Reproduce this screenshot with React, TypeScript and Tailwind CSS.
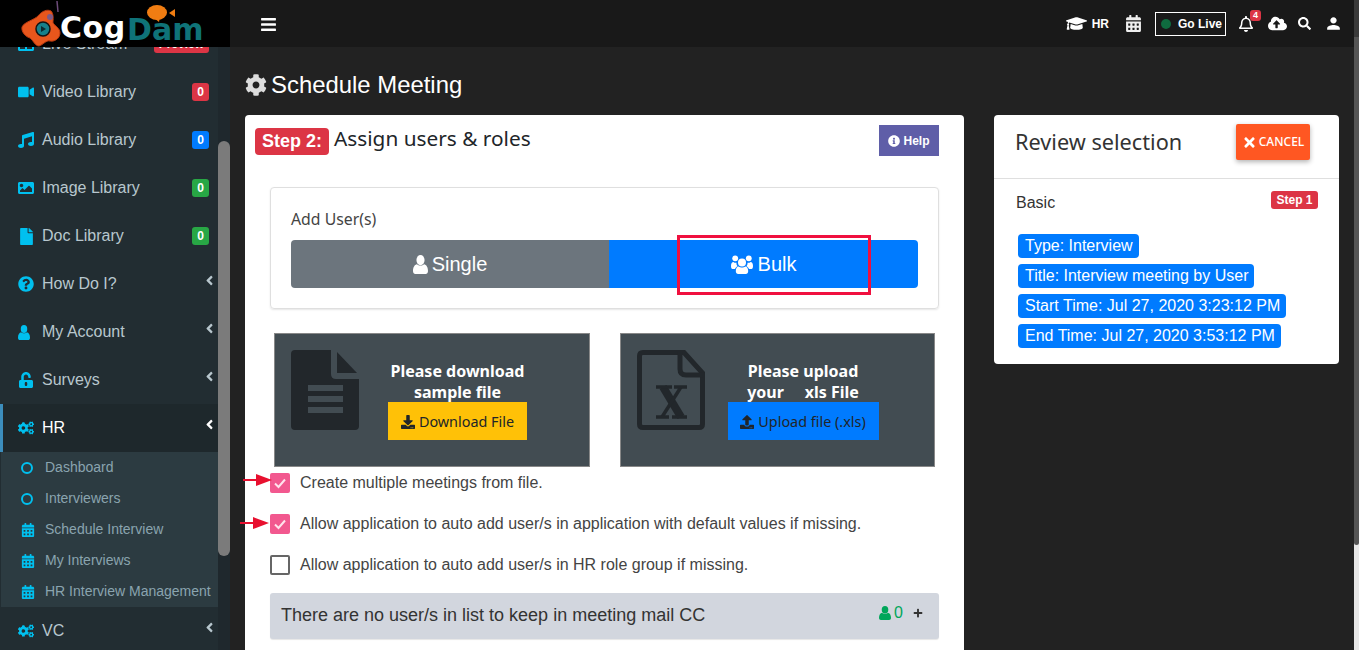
import React from "react";
import {
  FaVideo, FaMusic, FaImage, FaFile, FaQuestionCircle, FaUnlockAlt, FaCogs,
  FaCalendarAlt, FaAngleLeft, FaBars, FaGraduationCap, FaRegBell, FaCloudUploadAlt, FaSearch,
  FaCog, FaInfoCircle, FaDownload, FaUpload, FaTimes, FaPlus, FaTable,
} from "react-icons/fa";
import { MdPerson } from "react-icons/md";

const sans = "font-['Liberation_Sans',Arial,sans-serif]";
const plex = "font-['Noto_Sans',sans-serif]";

function UserIcon({ w, h, className }: { w: number; h: number; className?: string }) {
  return (
    <svg className={className} width={w} height={h} viewBox="0 0 14 16" preserveAspectRatio="none" fill="currentColor">
      <ellipse cx="7" cy="4.300" rx="3.800" ry="4.300" />
      <path d="M0 13.500C0 10.500 1.500 8 3.700 7.800C5 9.300 9 9.300 10.300 7.800C12.500 8 14 10.500 14 13.500C14 15.200 13 16 11.800 16H2.200C1 16 0 15.200 0 13.500Z" />
    </svg>
  );
}

function UsersIcon() {
  return (
    <svg width="22" height="19" viewBox="0 0 22 19" fill="currentColor">
      <circle cx="4.200" cy="3.300" r="2.900" />
      <circle cx="17.800" cy="3.300" r="2.900" />
      <path d="M0 11C0 8.500 1 7 2.500 7C3.300 7.800 4.500 8 5.500 7.700C5.300 9 5.800 10.300 6.600 11.200C5.300 11.700 4.400 12.800 4 14H1.500C0.600 14 0 13 0 11Z" />
      <path d="M22 11C22 8.500 21 7 19.500 7C18.700 7.800 17.500 8 16.500 7.700C16.700 9 16.200 10.300 15.400 11.200C16.700 11.700 17.600 12.800 18 14H20.500C21.400 14 22 13 22 11Z" />
      <circle cx="11" cy="7.500" r="4" />
      <path d="M4.800 16C4.800 13.500 6 11.500 7.800 11.500C9.300 12.800 12.700 12.800 14.200 11.500C16 11.500 17.200 13.500 17.200 16C17.200 18 16.200 19 14.800 19H7.200C5.800 19 4.800 18 4.800 16Z" />
    </svg>
  );
}

function Badge({ c, t }: { c: string; t: string }) {
  return <span className={`${c} ml-auto mr-[3px] rounded-[3px] px-[5px] py-[2px] text-[12px] font-bold leading-[14px] text-white`}>{t}</span>;
}

function NavRow({ icon, label, badge, chevron, active }: { icon: React.ReactNode; label: string; badge?: React.ReactNode; chevron?: boolean; active?: boolean }) {
  return (
    <div className={`flex h-[48px] items-center border-l-[3px] pl-[18px] pr-[6px] ${active ? "border-[#3c8dbc] bg-[#1e282c] text-white" : "border-transparent text-[#b8c7ce]"}`}>
      <span className="-ml-[3px] flex w-[24px] items-center text-[16px] text-[#00c0ef]">{icon}</span>
      <span className="text-[16px]">{label}</span>
      {badge}
      {chevron && <FaAngleLeft className={`-mr-[5px] mb-[8px] ml-auto text-[15px] ${active ? "text-white" : "text-[#b8c7ce]"}`} />}
    </div>
  );
}

function Ring() {
  return <span className="block h-[12px] w-[12px] rounded-full border-2 border-[#00c0ef]" />;
}

function SubRow({ icon, label }: { icon: React.ReactNode; label: string }) {
  return (
    <div className="flex h-[31px] items-center pl-[20px] text-[14px] text-[#8aa4af]">
      <span className="flex w-[24px] items-center text-[14px] text-[#00c0ef]">{icon}</span>
      <span className="whitespace-nowrap">{label}</span>
    </div>
  );
}

function Logo() {
  return (
    <div className="relative h-[47px] w-[230px] font-['DejaVu_Sans',sans-serif]">
      <svg className="absolute left-0 top-0" width="70" height="47" viewBox="0 0 70 47">
        <path d="M57 1l1 11" stroke="#6d4c7a" strokeWidth="1.5" fill="none" />
        <path d="M22 27C24 22 34 20 38 16C42 11 47 9 51 11C54 14 53 20 53 23C55 26 60 28 60 33C60 38 55 42 50 41C46 40 43 45 39 46C35 46 33 40 30 38C26 37 21 32 22 27Z" fill="#e8561c" stroke="#b93a10" strokeWidth="1" />
        <circle cx="50" cy="17" r="3" fill="#7d5a86" />
        <circle cx="43" cy="29" r="7" fill="#17808a" stroke="#141414" strokeWidth="1.5" />
        <path d="M41 26l5 3-5 3z" fill="#0b2a30" />
      </svg>
      <span className="absolute left-[60px] top-[9px] text-[30px] font-bold leading-[38px] tracking-[0.5px] text-white">Cog</span>
      <span className="absolute left-[127px] top-[11px] text-[30px] font-bold leading-[38px] text-[#0f7378]">Dam</span>
      <svg className="absolute left-[146px] top-[4px]" width="30" height="18" viewBox="0 0 30 18">
        <ellipse cx="11" cy="8.500" rx="10" ry="7.500" fill="#f07d12" />
        <path d="M8 14l5 4 1-5z" fill="#f07d12" />
        <path d="M23 9l6-4v8z" fill="#f07d12" />
      </svg>
    </div>
  );
}

function Sidebar() {
  return (
    <aside className={`relative h-[650px] w-[230px] shrink-0 overflow-hidden bg-[#222d32] ${sans}`}>
      <div className="mt-[20px] w-[218px]">
        <NavRow icon={<FaTable />} label="Live Stream" badge={<Badge c="bg-[#dc3545]" t="Preview" />} />
        <NavRow icon={<FaVideo />} label="Video Library" badge={<Badge c="bg-[#dc3545]" t="0" />} />
        <NavRow icon={<FaMusic />} label="Audio Library" badge={<Badge c="bg-[#007bff]" t="0" />} />
        <NavRow icon={<FaImage />} label="Image Library" badge={<Badge c="bg-[#28a745]" t="0" />} />
        <NavRow icon={<FaFile className="text-[17px]" />} label="Doc Library" badge={<Badge c="bg-[#28a745]" t="0" />} />
        <NavRow icon={<FaQuestionCircle />} label="How Do I?" chevron />
        <NavRow icon={<UserIcon w={12} h={15} />} label="My Account" chevron />
        <NavRow icon={<FaUnlockAlt />} label="Surveys" chevron />
        <NavRow icon={<FaCogs />} label="HR" chevron active />
        <div className="ml-px bg-[#2c3b41]">
          <SubRow icon={<Ring />} label="Dashboard" />
          <SubRow icon={<Ring />} label="Interviewers" />
          <SubRow icon={<FaCalendarAlt />} label="Schedule Interview" />
          <SubRow icon={<FaCalendarAlt />} label="My Interviews" />
          <SubRow icon={<FaCalendarAlt />} label="HR Interview Management" />
        </div>
        <NavRow icon={<FaCogs />} label="VC" chevron />
      </div>
      <div className="absolute right-0 top-0 h-full w-[12px] bg-[#1f282d]">
        <div className="mt-[141px] h-[415px] w-[12px] rounded-[6px] bg-[#7b7b7b]" />
      </div>
      <div className="absolute left-0 top-0 h-[47px] w-[230px] bg-black">
        <Logo />
      </div>
    </aside>
  );
}

function Header() {
  return (
    <header className={`flex h-[47px] items-center bg-[#191919] pl-[30px] pr-[11px] text-white ${sans}`}>
      <FaBars className="mt-[2px] text-[17px]" />
      <div className="ml-auto flex items-center">
        <FaGraduationCap className="text-[21px]" />
        <span className="ml-[5px] text-[12px] font-bold">HR</span>
        <FaCalendarAlt className="ml-[16px] text-[17px] text-[#eeeeee]" />
        <div className="ml-[13px] flex h-[24px] w-[71px] items-center border border-white pl-[5px] text-[12px] font-bold">
          <span className="h-[10px] w-[10px] rounded-full bg-[#0f6b3f]" />
          <span className="ml-[7px]">Go Live</span>
        </div>
        <div className="relative ml-[12px]">
          <FaRegBell className="text-[16px]" />
          <span className="absolute -right-[7px] -top-[6px] rounded-[3px] bg-[#dc3545] px-[3px] text-[9px] font-bold leading-[11px]">4</span>
        </div>
        <FaCloudUploadAlt className="ml-[14px] text-[19px]" />
        <FaSearch className="ml-[11px] text-[13px]" />
        <MdPerson className="ml-[13px] text-[19px]" />
      </div>
    </header>
  );
}

function Check({ on }: { on: boolean }) {
  return on ? (
    <span className="flex h-[20px] w-[20px] shrink-0 items-center justify-center rounded-[2px] bg-[#f2588f]">
      <svg width="14" height="14" viewBox="0 0 14 14"><path d="M2 7.500l3.500 3.500L12 3.500" stroke="#ffe3ec" strokeWidth="2" fill="none" /></svg>
    </span>
  ) : (
    <span className="h-[20px] w-[20px] shrink-0 rounded-[2px] border-2 border-[#666666] bg-white" />
  );
}

function CheckRow({ on, label, arrow, arrowTop }: { on: boolean; label: string; arrow?: number; arrowTop?: number }) {
  return (
    <div className="relative flex h-[41px] items-start">
      {arrow !== undefined && (
        <svg className="absolute" style={{ left: arrow, top: arrowTop }} width="30" height="14" viewBox="0 0 30 14">
          <path d="M0 7h16" stroke="#e8102f" strokeWidth="2" />
          <path d="M13 1l16 6-16 6z" fill="#e8102f" />
        </svg>
      )}
      <Check on={on} />
      <span className="ml-[10px] pt-[1px] text-[16px] leading-[18px] text-[#444444]">{label}</span>
    </div>
  );
}

function DocIcon() {
  return (
    <svg width="68" height="81" viewBox="0 0 68 81" fill="#22272b">
      <path d="M4 0H40V24Q40 29 45 29H68V76Q68 80 64 80H4Q0 80 0 76V4Q0 0 4 0Z" />
      <path d="M46 2L66 23H46Z" />
      <path d="M17 35H52V41H17ZM17 46H52V52H17ZM17 57H52V63H17Z" fill="#424c52" />
    </svg>
  );
}

function XlsIcon() {
  return (
    <svg width="68" height="81" viewBox="0 0 68 81" fill="none" stroke="#22272b">
      <path d="M47 2.500H6Q2.500 2.500 2.500 6V74Q2.500 77.500 6 77.500H62Q65.500 77.500 65.500 74V23Z" strokeWidth="5" />
      <path d="M43 2V19Q43 25 49 25H66" strokeWidth="5" />
      <path d="M26 37L44 67" strokeWidth="8" />
      <path d="M44 37L25 67" strokeWidth="3.500" />
      <path d="M19 37H35M37 37H50M19 67H32M35 67H50" strokeWidth="3.500" />
    </svg>
  );
}

function Panel({ icon, title, button, color, btnW }: { icon: React.ReactNode; title: React.ReactNode; button: React.ReactNode; color: string; btnW: string }) {
  return (
    <div className={`flex h-[134px] items-start border border-[#888888] bg-[#424c52] pt-[16px] ${plex}`}>
      <div className="ml-[16px] w-[70px]">{icon}</div>
      <div className="flex flex-1 flex-col items-center pr-[35px] pt-[11px]">
        <div className="text-center text-[16px] font-bold leading-[21px] text-white">{title}</div>
        <div className={`${color} ${btnW} -mt-px flex h-[38px] items-center justify-center gap-[4px] pt-[1px] text-[14.400px] text-[#212529]`}>{button}</div>
      </div>
    </div>
  );
}

function StepCard() {
  return (
    <section className="relative w-[719px] shrink-0 rounded-t-[4px] bg-white pl-[25px] pr-[25px]">
      <div className="-ml-[15px] flex h-[72px] items-start pt-[10px]">
        <span className={`mt-[3px] rounded-[4px] bg-[#dc3545] px-[7px] py-[3px] text-[18px] font-bold leading-[21px] text-white ${sans}`}>Step 2:</span>
        <span className={`-mt-px ml-[5px] text-[20.800px] leading-[29px] text-[#212529] ${plex}`}>Assign users &amp; roles</span>
        <span className={`ml-auto flex h-[31px] w-[60px] items-center justify-center gap-[3px] bg-[#5f5ea8] text-[12px] font-bold text-white ${sans}`}><FaInfoCircle />Help</span>
      </div>
      <div className="relative h-[122px] rounded-[4px] border border-[#dfdfdf] px-[20px] pt-[21px] shadow-[0_1px_2px_rgba(0,0,0,0.1)]">
        <div className={`text-[15.800px] leading-[21px] text-[#444444] ${plex}`}>Add User(s)</div>
        <div className={`mt-[10px] flex h-[48px] overflow-hidden rounded-[4px] text-[20px] text-white ${sans}`}>
          <div className="flex w-[318px] items-center justify-center gap-[4px] bg-[#6c757d]"><UserIcon w={15} h={19} />Single</div>
          <div className="flex flex-1 items-center justify-center gap-[5px] bg-[#007bff]"><UsersIcon />Bulk</div>
        </div>
        <div className="absolute left-[406px] top-[47px] h-[60px] w-[194px] border-[3px] border-[#f0103f]" />
      </div>
      <div className="mt-[24px] grid grid-cols-[316px_315px] gap-[30px] pl-[4px]">
        <Panel
          icon={<DocIcon />}
          title={<>Please download<br />sample file</>}
          color="bg-[#ffc107]"
          btnW="w-[139px]"
          button={<><FaDownload className="text-[14px]" />Download File</>}
        />
        <Panel
          icon={<XlsIcon />}
          title={<>Please upload<br />your&nbsp;&nbsp;&nbsp;&nbsp; xls File</>}
          color="bg-[#007bff]"
          btnW="w-[151px]"
          button={<><FaUpload className="text-[14px]" />Upload file (.xls)</>}
        />
      </div>
      <div className={`mt-[6px] ${sans}`}>
        <CheckRow on label="Create multiple meetings from file." arrow={-27} arrowTop={0} />
        <CheckRow on label="Allow application to auto add user/s in application with default values if missing." arrow={-30} arrowTop={2} />
        <CheckRow on={false} label="Allow application to auto add user/s in HR role group if missing." />
      </div>
      <div className={`-mt-[3px] flex h-[46px] items-center rounded-[3px] bg-[#d2d6de] pb-[2px] pl-[11px] pr-[16px] text-[18px] text-[#333333] shadow-[0_1px_1px_rgba(0,0,0,0.1)] ${sans}`}>
        There are no user/s in list to keep in meeting mail CC
        <span className="mb-[5px] ml-auto flex items-center text-[16px] text-[#00a65a]"><UserIcon w={12} h={14} className="mr-[3px]" />0</span>
        <FaPlus className="mb-[5px] ml-[10px] text-[10px] text-[#333333]" />
      </div>
      <div className="h-[40px]" />
    </section>
  );
}

function ReviewCard() {
  const tags = ["Type: Interview", "Title: Interview meeting by User", "Start Time: Jul 27, 2020 3:23:12 PM", "End Time: Jul 27, 2020 3:53:12 PM"];
  return (
    <section className="ml-[30px] h-[249px] w-[345px] shrink-0 rounded-[4px] bg-white">
      <div className="flex h-[64px] items-start border-b border-[#dfdfdf] pl-[22px] pr-[29px] pt-[9px]">
        <span className={`-ml-px mt-[3px] text-[21.700px] leading-[30px] text-[#333333] ${plex}`}>Review selection</span>
        <span className={`ml-auto flex h-[36px] w-[74px] items-center justify-center gap-[2px] rounded-[2px] bg-[#ff5722] text-[12px] font-medium text-white shadow-[0_2px_5px_rgba(0,0,0,0.3)] ${plex}`}><FaTimes className="text-[15px]" />CANCEL</span>
      </div>
      <div className={`px-[22px] ${sans}`}>
        <div className="flex items-start pt-[12px]">
          <span className="pt-[2px] text-[16px] leading-[20px] text-[#333333]">Basic</span>
          <span className="ml-auto -mr-[1px] rounded-[3px] bg-[#dc3545] px-[5.500px] py-[1px] text-[12px] font-bold leading-[16px] text-white">Step 1</span>
        </div>
        <div className="mt-[21px] flex flex-col items-start gap-[6px] pl-[2px]">
          {tags.map((t) => (
            <span key={t} className="rounded-[4px] bg-[#007bff] pl-[7px] pr-[6px] text-[16px] leading-[24px] text-white">{t}</span>
          ))}
        </div>
      </div>
    </section>
  );
}

export default function App() {
  return (
    <div className="flex h-[650px] w-[1359px] overflow-hidden bg-[#222222]">
      <Sidebar />
      <div className="flex min-w-0 flex-1 flex-col">
        <Header />
        <main className="relative flex-1 overflow-hidden pl-[15px]">
          <h1 className={`flex h-[68px] items-center gap-[4px] pb-[7px] pt-[15px] text-[23.900px] font-normal text-white ${sans}`}>
            <FaCog className="text-[22px] text-[#dddddd]" />Schedule Meeting
          </h1>
          <div className="flex items-start">
            <StepCard />
            <ReviewCard />
          </div>
        </main>
      </div>
      <div className="flex w-[5px] shrink-0 flex-col bg-[#e8e8e8]">
        <div className="h-[37px] bg-[#3a3a3a]" />
        <div className="h-[508px] rounded-b-[3px] bg-[#555555]" />
      </div>
    </div>
  );
}
